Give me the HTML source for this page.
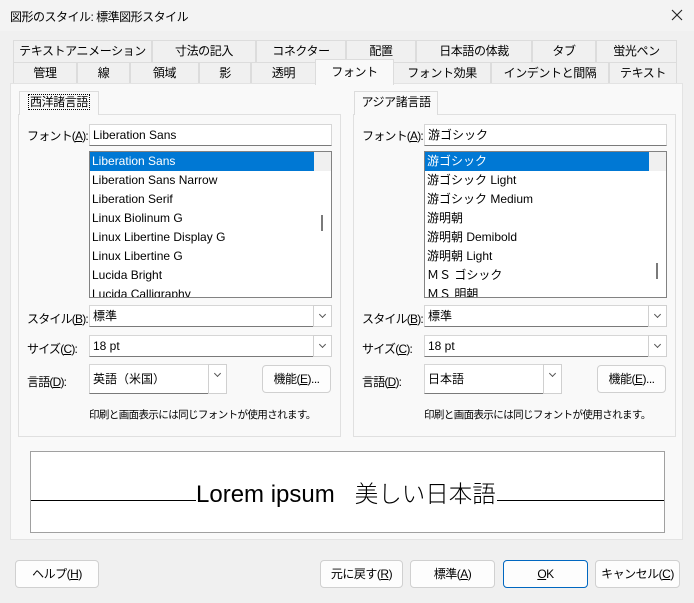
<!DOCTYPE html>
<html><head><meta charset="utf-8"><style>
*{box-sizing:border-box;margin:0;padding:0}
body{width:694px;height:603px;background:#f0f0f0;font-family:"Liberation Sans","Noto Sans CJK JP",sans-serif;font-size:12px;color:#000;position:relative;overflow:hidden}
.a{position:absolute}
.tab{position:absolute;height:22px;border:1px solid #dcdcdc;border-bottom:none;background:#f0f0f0;text-align:center;line-height:21px;font-size:12px;letter-spacing:-0.4px;white-space:nowrap}
.inp{position:absolute;background:#fff;border:1px solid #d6d6d6;border-bottom:1px solid #7a7a7a;height:22px;line-height:20px;padding-left:3px}
.dd{position:absolute;right:-1px;top:-1px;width:19px;height:22px;border:1px solid #d0d0d0;background:#fff}
.dd:after{content:"";position:absolute;left:6px;top:6px;width:4px;height:4px;border-right:1px solid #555;border-bottom:1px solid #555;transform:rotate(45deg)}
.list{position:absolute;background:#fff;border:1px solid #828282;overflow:hidden}
.list div{height:19px;line-height:19px;padding-left:2px;white-space:nowrap}
.sel{background:#0078d4;color:#fff;margin-right:17px}
.sb{position:absolute;right:0;top:0;width:17px;height:100%;background:#f0f0f0}
.btn{position:absolute;height:28px;background:#fdfdfd;border:1px solid #d0d0d0;border-radius:4px;text-align:center;line-height:26px;font-size:12px;letter-spacing:-0.5px;white-space:nowrap}
.grp{position:absolute;border:1px solid #e0e0e0;background:#f9f9f9}
.lbl{position:absolute;font-size:12px;letter-spacing:-0.8px;white-space:nowrap}
.note{position:absolute;font-size:10.5px;letter-spacing:-0.6px;white-space:nowrap}
u{text-decoration:underline}
</style></head><body>
<div class="a" style="left:0;top:0;width:694px;height:31px;background:#f3f3f3"></div>
<div class="a" style="left:10px;top:8px;font-size:12px;letter-spacing:-0.5px">図形のスタイル: 標準図形スタイル</div>
<svg class="a" style="left:671px;top:9px" width="12" height="12"><path d="M1 1L11 11M11 1L1 11" stroke="#222" stroke-width="1.1"/></svg>

<div class="tab" style="left:13px;top:40px;width:139px">テキストアニメーション</div>
<div class="tab" style="left:152px;top:40px;width:104px">寸法の記入</div>
<div class="tab" style="left:256px;top:40px;width:90px">コネクター</div>
<div class="tab" style="left:346px;top:40px;width:70px">配置</div>
<div class="tab" style="left:416px;top:40px;width:116px">日本語の体裁</div>
<div class="tab" style="left:532px;top:40px;width:64px">タブ</div>
<div class="tab" style="left:596px;top:40px;width:81px">蛍光ペン</div>
<div class="tab" style="left:13px;top:62px;width:64px">管理</div>
<div class="tab" style="left:77px;top:62px;width:53px">線</div>
<div class="tab" style="left:130px;top:62px;width:69px">領域</div>
<div class="tab" style="left:199px;top:62px;width:52px">影</div>
<div class="tab" style="left:251px;top:62px;width:65px">透明</div>
<div class="tab" style="left:393px;top:62px;width:98px">フォント効果</div>
<div class="tab" style="left:491px;top:62px;width:118px">インデントと間隔</div>
<div class="tab" style="left:609px;top:62px;width:68px">テキスト</div>

<div class="a" style="left:10px;top:83px;width:673px;height:457px;background:#f9f9f9;border:1px solid #e3e3e3"></div>
<div class="tab" style="left:315px;top:59px;width:79px;height:26px;background:#f9f9f9;line-height:25px;z-index:2">フォント</div>

<!-- left group -->
<div class="grp" style="left:18px;top:114px;width:323px;height:323px"></div>
<div class="tab" style="left:19px;top:91px;width:80px;height:24px;background:#f9f9f9"><span style="border:1px dotted #000;padding:0 1px">西洋諸言語</span></div>
<div class="lbl" style="left:27px;top:127px">フォント(<u>A</u>):</div>
<div class="inp" style="left:89px;top:124px;width:243px">Liberation Sans</div>
<div class="list" style="left:89px;top:151px;width:243px;height:147px">
<div class="sel">Liberation Sans</div><div>Liberation Sans Narrow</div><div>Liberation Serif</div><div>Linux Biolinum G</div><div>Linux Libertine Display G</div><div>Linux Libertine G</div><div>Lucida Bright</div><div>Lucida Calligraphy</div>
<div class="sb"><div class="a" style="left:7px;top:63px;width:2px;height:16px;background:#7a7a7a"></div></div></div>
<div class="lbl" style="left:27px;top:310px">スタイル(<u>B</u>):</div>
<div class="inp" style="left:89px;top:305px;width:243px">標準<div class="dd"></div></div>
<div class="lbl" style="left:27px;top:340px">サイズ(<u>C</u>):</div>
<div class="inp" style="left:89px;top:335px;width:243px">18 pt<div class="dd"></div></div>
<div class="lbl" style="left:27px;top:373px">言語(<u>D</u>):</div>
<div class="inp" style="left:89px;top:364px;width:138px;height:30px;line-height:28px">英語（米国）<div class="dd" style="height:30px"></div></div>
<div class="btn" style="left:262px;top:365px;width:69px">機能(<u>E</u>)...</div>
<div class="note" style="left:89px;top:407px">印刷と画面表示には同じフォントが使用されます。</div>

<!-- right group -->
<div class="grp" style="left:353px;top:114px;width:323px;height:323px"></div>
<div class="tab" style="left:354px;top:91px;width:84px;height:24px;background:#f9f9f9">アジア諸言語</div>
<div class="lbl" style="left:362px;top:127px">フォント(<u>A</u>):</div>
<div class="inp" style="left:424px;top:124px;width:243px">游ゴシック</div>
<div class="list" style="left:424px;top:151px;width:243px;height:147px">
<div class="sel">游ゴシック</div><div>游ゴシック Light</div><div>游ゴシック Medium</div><div>游明朝</div><div>游明朝 Demibold</div><div>游明朝 Light</div><div>ＭＳ ゴシック</div><div>ＭＳ 明朝</div>
<div class="sb"><div class="a" style="left:7px;top:111px;width:2px;height:16px;background:#7a7a7a"></div></div></div>
<div class="lbl" style="left:362px;top:310px">スタイル(<u>B</u>):</div>
<div class="inp" style="left:424px;top:305px;width:243px">標準<div class="dd"></div></div>
<div class="lbl" style="left:362px;top:340px">サイズ(<u>C</u>):</div>
<div class="inp" style="left:424px;top:335px;width:243px">18 pt<div class="dd"></div></div>
<div class="lbl" style="left:362px;top:373px">言語(<u>D</u>):</div>
<div class="inp" style="left:424px;top:364px;width:138px;height:30px;line-height:28px">日本語<div class="dd" style="height:30px"></div></div>
<div class="btn" style="left:597px;top:365px;width:69px">機能(<u>E</u>)...</div>
<div class="note" style="left:424px;top:407px">印刷と画面表示には同じフォントが使用されます。</div>

<!-- preview -->
<div class="a" style="left:30px;top:451px;width:635px;height:82px;background:#fff;border:1px solid #a0a0a0"></div>
<div class="a" style="left:31px;top:500px;width:165px;height:1px;background:#000"></div>
<div class="a" style="left:497px;top:500px;width:167px;height:1px;background:#000"></div>
<div class="a" style="left:196px;top:478px;font-size:24px;line-height:28px;white-space:nowrap">Lorem ipsum<span style="font-family:'Noto Sans CJK JP',sans-serif;font-weight:300;font-size:23.5px;margin-left:20px">美しい日本語</span></div>

<!-- buttons -->
<div class="btn" style="left:15px;top:560px;width:84px">ヘルプ(<u>H</u>)</div>
<div class="btn" style="left:320px;top:560px;width:83px">元に戻す(<u>R</u>)</div>
<div class="btn" style="left:410px;top:560px;width:85px">標準(<u>A</u>)</div>
<div class="btn" style="left:503px;top:560px;width:85px;border-color:#0067c0"><u>O</u>K</div>
<div class="btn" style="left:595px;top:560px;width:85px">キャンセル(<u>C</u>)</div>
</body></html>
